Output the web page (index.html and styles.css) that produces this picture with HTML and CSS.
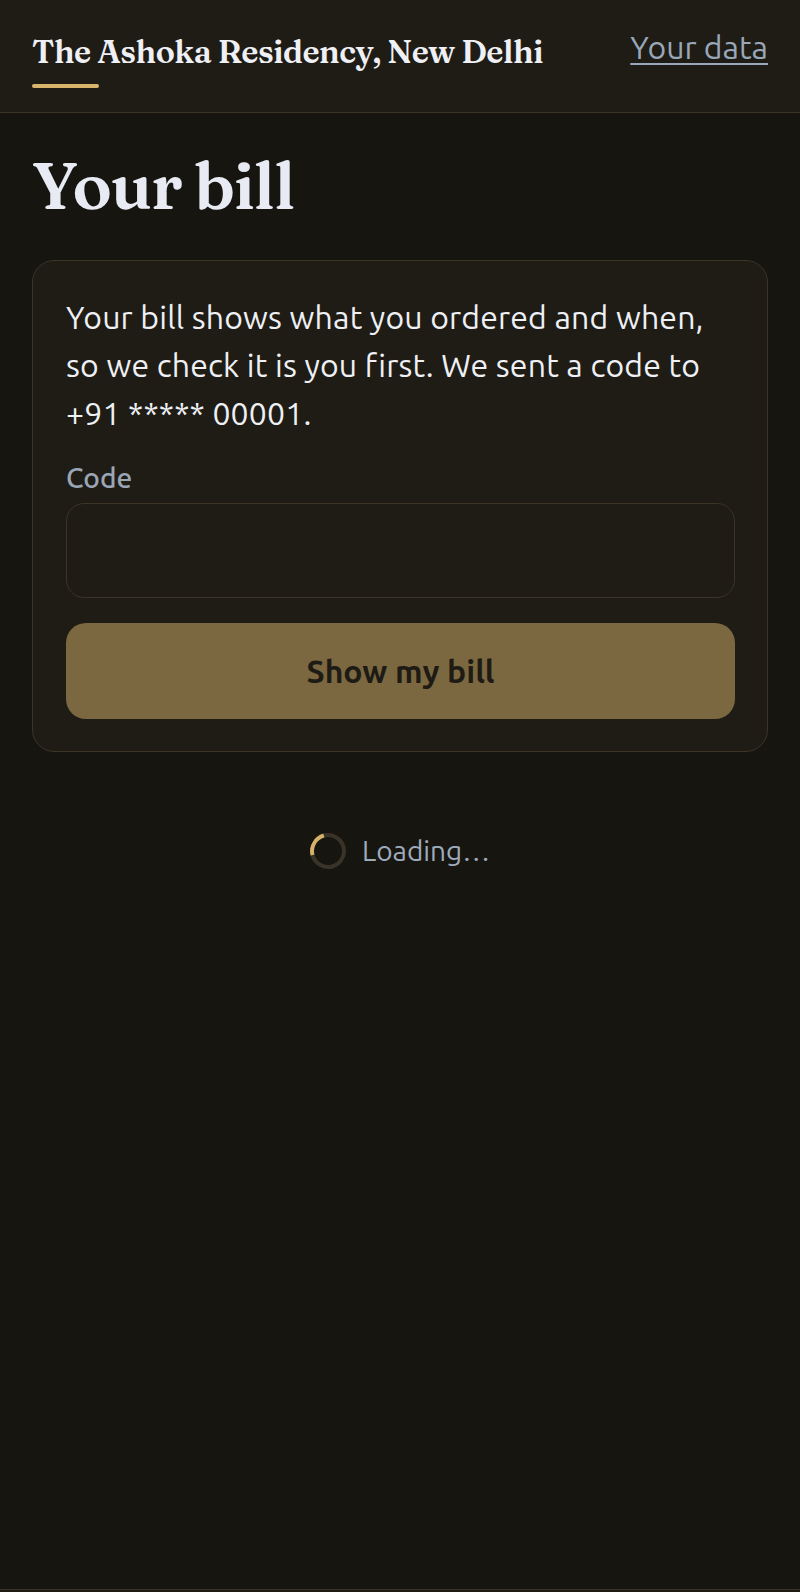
FILE: index.html
```html
<!DOCTYPE html>
<html lang="en">
<head>
<meta charset="utf-8">
<title>Your bill – The Ashoka Residency, New Delhi</title>
<link rel="stylesheet" href="styles.css">
</head>
<body>
<header class="site-header">
  <div class="brand">
    <span class="brand-name">The Ashoka Residency, New Delhi</span>
    <span class="brand-bar"></span>
  </div>
  <a class="data-link" href="#">Your data</a>
</header>
<main class="page">
  <h1 class="page-title">Your bill</h1>
  <section class="card">
    <p class="intro">Your bill shows what you ordered and when, so we check it is you first. We sent a code to +91 ***** 00001.</p>
    <label class="field-label" for="code">Code</label>
    <input class="code-input" id="code" type="text" inputmode="numeric" autocomplete="one-time-code">
    <button class="submit" type="button">Show my bill</button>
  </section>
  <div class="loading">
    <span class="spinner"></span>
    <span class="loading-text">Loading…</span>
  </div>
</main>
<footer class="site-footer"></footer>
</body>
</html>
```
FILE: styles.css
```css
* { box-sizing: border-box; }

html, body {
  margin: 0;
  padding: 0;
  background: #17150f;
}

body {
  font-family: "Ubuntu", "Lato", "Noto Sans", sans-serif;
  color: #eceff4;
}

.site-header {
  display: flex;
  justify-content: space-between;
  align-items: flex-start;
  padding: 32px 32px 24px;
  background: #1f1c16;
  border-bottom: 1px solid #3a3428;
}

.brand {
  display: flex;
  flex-direction: column;
}

.brand-name {
  font-family: "Fraunces", "Liberation Serif", serif;
  font-weight: 600;
  font-variation-settings: "opsz" 144;
  font-size: 32px;
  line-height: 40px;
  letter-spacing: -0.015em;
  color: #eef0f5;
}

.brand-bar {
  width: 67px;
  height: 4px;
  margin-top: 12px;
  border-radius: 2px;
  background: #d8b56b;
}

.data-link {
  font-size: 32px;
  line-height: 30px;
  color: #9aa7b9;
  text-decoration: underline;
  text-underline-offset: 4px;
  text-decoration-thickness: 2px;
}

.page {
  min-height: 1476px;
  padding: 34px 32px 0;
}

.page-title {
  margin: 0 0 36px;
  font-family: "Fraunces", "Liberation Serif", serif;
  font-weight: 600;
  font-variation-settings: "opsz" 144;
  font-size: 66px;
  line-height: 77px;
  letter-spacing: -0.02em;
  color: #e8ebf3;
}

.card {
  background: #1f1c16;
  border: 1px solid #3b3427;
  border-radius: 22px;
  padding: 32px 32px 32px 33px;
}

.intro {
  margin: 0 0 21px;
  font-size: 32px;
  line-height: 48px;
  letter-spacing: 0.005em;
  color: #eef0f4;
}

.field-label {
  display: block;
  font-size: 28px;
  line-height: 39px;
  font-weight: 500;
  color: #9aa6b6;
}

.code-input {
  display: block;
  width: 100%;
  height: 95px;
  margin-top: 6px;
  padding: 0 24px;
  background: #1f1c16;
  border: 1px solid #3b3427;
  border-radius: 18px;
  color: #eceff4;
  font: inherit;
  font-size: 32px;
  outline: none;
}

.submit {
  display: block;
  width: 100%;
  height: 96px;
  margin-top: 25px;
  border: none;
  border-radius: 20px;
  background: #7b6840;
  color: #1e1b15;
  font-family: inherit;
  font-size: 32px;
  font-weight: 700;
}

.loading {
  display: flex;
  justify-content: center;
  align-items: center;
  gap: 16px;
  margin-top: 81px;
}

.spinner {
  width: 36px;
  height: 36px;
  border: 4px solid #3a3329;
  border-left-color: #d6b36b;
  border-radius: 50%;
  transform: rotate(30deg);
}

.loading-text {
  font-size: 28px;
  line-height: 36px;
  color: #9eabbd;
}

.site-footer {
  height: 80px;
  border-top: 1px solid #3a3428;
  background: #1f1c16;
}
```
